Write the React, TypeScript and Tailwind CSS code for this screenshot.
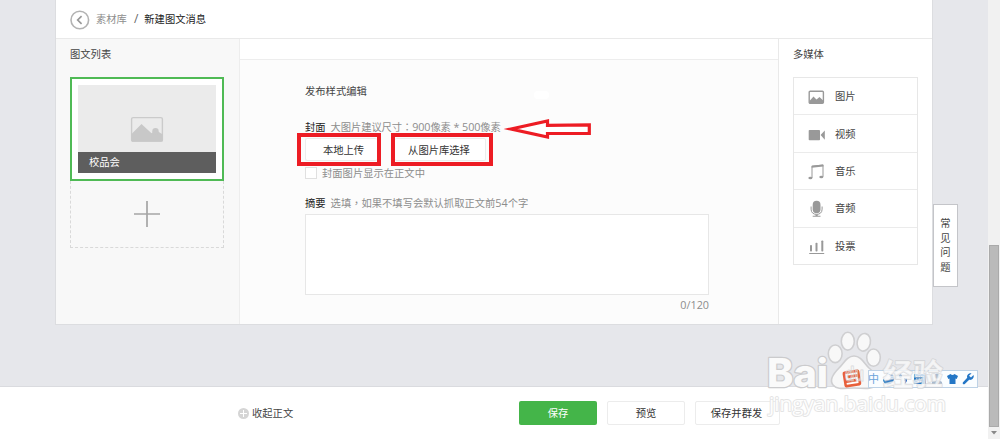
import type { ReactNode } from 'react'

type MediaItem = {
  label: string
  icon: ReactNode
}

type ButtonProps = {
  children: ReactNode
  className?: string
}

const mediaItems: MediaItem[] = [
  {
    label: '图片',
    icon: (
      <svg width="17" height="16" viewBox="0 0 17 16" fill="#999">
        <rect x="1.2" y="2.2" width="14.2" height="12" rx="1" fill="none" stroke="#999" strokeWidth="1.4" />
        <path d="M1.5 12L5.5 7.5L8.5 10.5L11.5 8L15.2 11.5V14H1.5Z" />
      </svg>
    ),
  },
  {
    label: '视频',
    icon: (
      <svg width="17" height="16" viewBox="0 0 17 16" fill="#999">
        <rect x="0.7" y="3" width="11.3" height="10.2" rx="0.8" />
        <path d="M12.6 8.1L16.8 3.4V12.8Z" />
      </svg>
    ),
  },
  {
    label: '音乐',
    icon: (
      <svg width="17" height="16" viewBox="0 0 17 16" fill="#999">
        <path d="M4 14V2.2L15 1V12.8" fill="none" stroke="#999" strokeWidth="1" />
        <path d="M3.6 1.8L15.4 0.5V2.4L3.6 3.7Z" />
        <ellipse cx="2.4" cy="14" rx="2" ry="1.3" />
        <ellipse cx="13.3" cy="13" rx="2" ry="1.3" />
      </svg>
    ),
  },
  {
    label: '音频',
    icon: (
      <svg width="17" height="18" viewBox="0 0 17 18" fill="#999">
        <rect x="4.7" y="0.8" width="7.8" height="12.4" rx="3.9" />
        <path d="M3.1 6.5V9.2C3.1 12.5 5.3 14.4 8.6 14.4C11.9 14.4 14.1 12.5 14.1 9.2V6.5" fill="none" stroke="#999" strokeWidth="1" />
        <path d="M7.5 14.4H9.7V15.7H12.5V16.8H4.7V15.7H7.5Z" />
      </svg>
    ),
  },
  {
    label: '投票',
    icon: (
      <svg width="17" height="16" viewBox="0 0 17 16" fill="#999">
        <rect x="2" y="6" width="2" height="6.5" rx="0.8" />
        <rect x="7.5" y="3.8" width="2" height="8.7" rx="0.8" />
        <rect x="13.3" y="1.5" width="2" height="11" rx="0.8" />
        <rect x="1.2" y="14" width="15" height="1" />
      </svg>
    ),
  },
]

function PlainButton({ children, className = '' }: ButtonProps) {
  return (
    <button
      className={`flex items-center justify-center rounded-[2px] border border-[#ececec] bg-white text-[#333] ${className}`.trim()}
    >
      {children}
    </button>
  )
}

function Header() {
  return (
    <header className="flex h-[39px] shrink-0 items-center border-b border-[#e9e9e9] bg-white pl-[14px]">
      <svg width="20" height="20" viewBox="0 0 20 20" fill="none" className="mt-px">
        <circle cx="9.8" cy="10" r="8.8" stroke="#b3b3b3" strokeWidth="1.6" />
        <path d="M11.6 6.2L7.7 10L11.6 13.8" stroke="#999" strokeWidth="1.7" />
      </svg>
      <span className="ml-[6px] text-[#8d8d8d]">素材库</span>
      <span className="ml-[7px] text-[12px] text-[#666]">/</span>
      <span className="ml-[6px] text-[#222]">新建图文消息</span>
    </header>
  )
}

function ArticleList() {
  return (
    <aside className="w-[184px] border-r border-[#ededed] bg-[#f8f8f8] pl-[14px]">
      <h2 className="h-[38px] pt-[7px]">图文列表</h2>
      <div className="flex h-[104px] w-[154px] flex-col border-2 border-[#4fba55] bg-white p-[6px]">
        <div className="flex h-[67px] items-end justify-center bg-[#ebebeb] pb-[9px]">
          <svg width="34" height="27" viewBox="0 0 34 27">
            <rect x="1.6" y="1.6" width="30.8" height="23.8" rx="1.5" fill="none" stroke="#cbcbcb" strokeWidth="1.4" />
            <path d="M1.5 18L11.5 8L21.5 17.3L25.5 14L32.5 18.2V25H1.5Z" fill="#c8c8c8" />
            <circle cx="25.5" cy="15.2" r="3.2" fill="#c8c8c8" />
          </svg>
        </div>
        <div className="flex h-[21px] items-center bg-[#5e5e5e] pb-px pl-[11px] text-white">校品会</div>
      </div>
      <div className="flex h-[67px] w-[154px] items-center justify-center border border-t-0 border-dashed border-[#d9d9d9]">
        <svg width="26" height="26" viewBox="0 0 26 26" stroke="#a5a5a5" strokeWidth="1.7">
          <path d="M13 0V26M0 13H26" />
        </svg>
      </div>
    </aside>
  )
}

function PublishForm() {
  return (
    <main className="relative flex w-[538px] flex-col bg-[#fcfcfc]">
      <div className="h-[21px] border-b border-[#ededed] bg-white" />
      <div className="flex flex-col pl-[65px]">
        <h2 className="mt-[23px] h-[16px]">发布样式编辑</h2>
        <p className="mt-[20px] flex h-[16px] whitespace-pre">
          <span className="mr-[5px] text-[#222]">封面</span>
          <span className="tracking-[-0.1px] text-[#8d8d8d]">
            大图片建议尺寸<span className="font-['Noto_Sans_CJK_TC']">：</span>
            <span className="text-[10.8px]">900</span>像素
            <span className="text-[10.8px]"> * 500</span>像素
          </span>
        </p>
        <div className="-ml-[8px] -mt-[2px] flex h-[33px] gap-[10px]">
          <div className="flex w-[84px] items-center border-4 border-[#ed1c24] pl-[4px]">
            <PlainButton className="h-[23px] w-[72px] border-r-0 pl-[4px]">本地上传</PlainButton>
          </div>
          <div className="flex w-[102px] items-center border-4 border-[#ed1c24]">
            <PlainButton className="h-[23px] w-[91px] border-l-0 pr-[2px]">从图片库选择</PlainButton>
          </div>
        </div>
        <label className="flex h-[13px] items-center text-[#8d8d8d]">
          <span className="mr-[5px] h-[12px] w-[12px] border border-[#e0e0e0] bg-white" />
          封面图片显示在正文中
        </label>
        <p className="mt-[16px] flex h-[19px]">
          <span className="mr-[5px] text-[#222]">摘要</span>
          <span className="text-[#8d8d8d]">
            选填<span className="font-['Noto_Sans_CJK_TC']">，</span>如果不填写会默认抓取正文前
            <span className="text-[10.8px]">54</span>个字
          </span>
        </p>
        <textarea className="block h-[81px] w-[404px] resize-none border border-[#e7e7e7] bg-white" />
        <p className="w-[404px] pt-[2px] text-right text-[10.8px] text-[#8d8d8d]">0/120</p>
      </div>
      <div className="absolute left-[294px] top-[52px] h-[8px] w-[15px] rounded-full bg-white" />
      <svg className="absolute left-[260px] top-[78px]" width="94" height="26" viewBox="0 0 94 26">
        <path
          d="M11 12L47.5 4V8.3L89.3 7.8V16.5H47.5V20Z"
          fill="white"
          stroke="#ed1c24"
          strokeWidth="3.2"
          strokeMiterlimit="8"
        />
      </svg>
    </main>
  )
}

function MediaPanel() {
  return (
    <aside className="flex-1 border-l border-[#e9e9e9] bg-white pl-[14px]">
      <h2 className="h-[38px] pt-[7px]">多媒体</h2>
      <ul className="flex h-[188px] w-[125px] flex-col divide-y divide-[#ebebeb] border border-[#e7e7e7]">
        {mediaItems.map((item) => (
          <li key={item.label} className="flex flex-1 items-center pl-[14px]">
            <span className="mr-[10px] mt-[2px]">{item.icon}</span>
            {item.label}
          </li>
        ))}
      </ul>
    </aside>
  )
}

function Footer() {
  return (
    <footer className="flex h-[53px] items-start border-t border-[#dadbdf] bg-white pl-[238px] pt-[14px]">
      <div className="flex h-[24px] w-[281px] items-center gap-[3px]">
        <svg width="11" height="11" viewBox="0 0 11 11">
          <circle cx="5.5" cy="5.5" r="5.5" fill="#d5d5d5" />
          <path d="M5.5 2V9M2 5.5H9" stroke="white" strokeWidth="1" />
        </svg>
        收起正文
      </div>
      <button className="h-[24px] w-[78px] rounded-[2px] bg-[#44b549] text-white">保存</button>
      <PlainButton className="ml-[10px] h-[24px] w-[78px]">预览</PlainButton>
      <PlainButton className="ml-[10px] h-[24px] w-[85px] pr-[2px]">保存并群发</PlainButton>
    </footer>
  )
}

function Scrollbar() {
  return (
    <div className="flex w-[12px] flex-col items-center bg-[#f1f1f1]">
      <div className="mt-[245px] h-[182px] w-[10px] border border-[#aaa] bg-[#bababa]" />
      <svg width="6" height="4" viewBox="0 0 6 4" className="mt-[4px]">
        <path d="M0 0H6L3 3.5Z" fill="#888" />
      </svg>
    </div>
  )
}

// Floating input method toolbar
function ImeBar() {
  return (
    <div className="absolute left-[868px] top-[370px] h-[18px] w-[110px] border border-[#bdd2e6] bg-[#fafdff]">
      <svg className="absolute -left-[27px] -top-[4px]" width="136" height="24" viewBox="0 0 136 24" fill="#2376c6">
        <g transform="rotate(-9 10 12)">
          <rect x="1.5" y="3.5" width="17" height="16" rx="2" fill="#e8603a" />
          <path d="M16 7H5V11.5H15V16H4" fill="none" stroke="white" strokeWidth="1.8" />
        </g>
        <path d="M45 6.5C49 8 50 11 47 12.8C44.5 14 42 13 41 12C41 16 44 18 47 17.3C52 16.5 54 10 50 7.5Z" />
        <circle cx="58.5" cy="9" r="1.6" />
        <path d="M62 11H65V14L62.5 17.5L63 14H62Z" />
        <rect x="72" y="7" width="12" height="10" rx="1" />
        <path d="M74 9.5H82M74 12H82M75.5 14.7H80.5" stroke="white" strokeWidth="1" strokeDasharray="1.5 1" />
        <circle cx="95" cy="9" r="2.5" fill="#a6b9cf" />
        <path d="M90 17V15Q95 11 100 15V17Z" fill="#a6b9cf" />
        <path d="M108.5 7Q110.5 9 112.5 7L116 9L114.7 12L113.5 11.5V17H107.5V11.5L106.3 12L105 9Z" />
        <path d="M131.5 8L129 10.5L127 8.7L129.5 6.4C126.8 5.7 124.4 8.2 125.2 10.7L121 15.2C120 16.4 121.5 18 122.8 17L127.2 12.8C130 13.5 132.6 10.7 131.5 8Z" />
      </svg>
      <span className="absolute -left-px top-0 text-[11px] leading-[15px] text-[#6ba4da]">中</span>
    </div>
  )
}

function PawMark() {
  return (
    <svg
      className="pointer-events-none absolute left-[760px] top-[325px]"
      width="200"
      height="100"
      viewBox="0 0 200 100"
      fill="#f8f8f8"
      stroke="#cfcfd1"
      strokeWidth="1.6"
    >
      <ellipse cx="75.2" cy="28.8" rx="6.9" ry="8.8" />
      <ellipse cx="87.8" cy="16.2" rx="6.5" ry="8.9" />
      <ellipse cx="103.8" cy="17.3" rx="6.6" ry="8.9" transform="rotate(12 103.8 17.3)" />
      <ellipse cx="113.5" cy="32.6" rx="6.8" ry="8.6" />
      <path d="M94 31C101 31 104 38 109 43C116 49 121 55 116 60C112 65 103 63 94 63C85 63 77 65 73 60C69 55 73 49 79 43C84 38 87 31 94 31Z" />
    </svg>
  )
}

function WatermarkText() {
  return (
    <svg
      className="pointer-events-none absolute left-[760px] top-[325px]"
      width="200"
      height="100"
      viewBox="0 0 200 100"
      fill="#fafafa"
      stroke="#cbcbcd"
      strokeWidth="2.4"
      strokeLinejoin="round"
      paintOrder="stroke"
    >
      <text x="7" y="61.5" textLength="61" lengthAdjust="spacingAndGlyphs" className="font-['Inter'] text-[39px] font-extrabold">
        Bai
      </text>
      <text x="85" y="56" textLength="19" lengthAdjust="spacingAndGlyphs" fillOpacity="0.3" strokeOpacity="0.7" strokeWidth="1.2" className="font-['Liberation_Sans'] text-[20px] font-bold">
        du
      </text>
      <text x="123" y="60" textLength="60" strokeWidth="1.8" fillOpacity="0.75" strokeOpacity="0.6" className="font-['Noto_Sans_CJK_SC'] text-[30px] font-bold">
        经验
      </text>
      <text x="9" y="86" textLength="177" lengthAdjust="spacingAndGlyphs" fill="#fdfdfd" stroke="#e4e4e4" strokeWidth="1.8" className="font-['Open_Sans'] text-[20px]">
        jingyan.baidu.com
      </text>
    </svg>
  )
}

export default function App() {
  return (
    <div className="relative flex h-[439px] w-[1000px] overflow-hidden bg-[#e6e7eb] font-['Open_Sans','Noto_Sans_CJK_SC',sans-serif] text-[10.3px] leading-[16px] text-[#444]">
      <div className="flex w-[988px] flex-col">
        <div className="flex h-[386px]">
          <div className="ml-[55px] flex h-[325px] w-[878px] flex-col border-x border-b border-[#dcdde0] bg-white">
            <Header />
            <div className="flex min-h-0 flex-1">
              <ArticleList />
              <PublishForm />
              <MediaPanel />
            </div>
          </div>
          <div className="mt-[204px] flex h-[83px] w-[25px] flex-col items-center border border-[#c4c5c9] bg-white pt-[11px] leading-[14.6px]">
            <span>常</span>
            <span>见</span>
            <span>问</span>
            <span>题</span>
          </div>
        </div>
        <Footer />
      </div>
      <Scrollbar />
      <PawMark />
      <ImeBar />
      <WatermarkText />
    </div>
  )
}
